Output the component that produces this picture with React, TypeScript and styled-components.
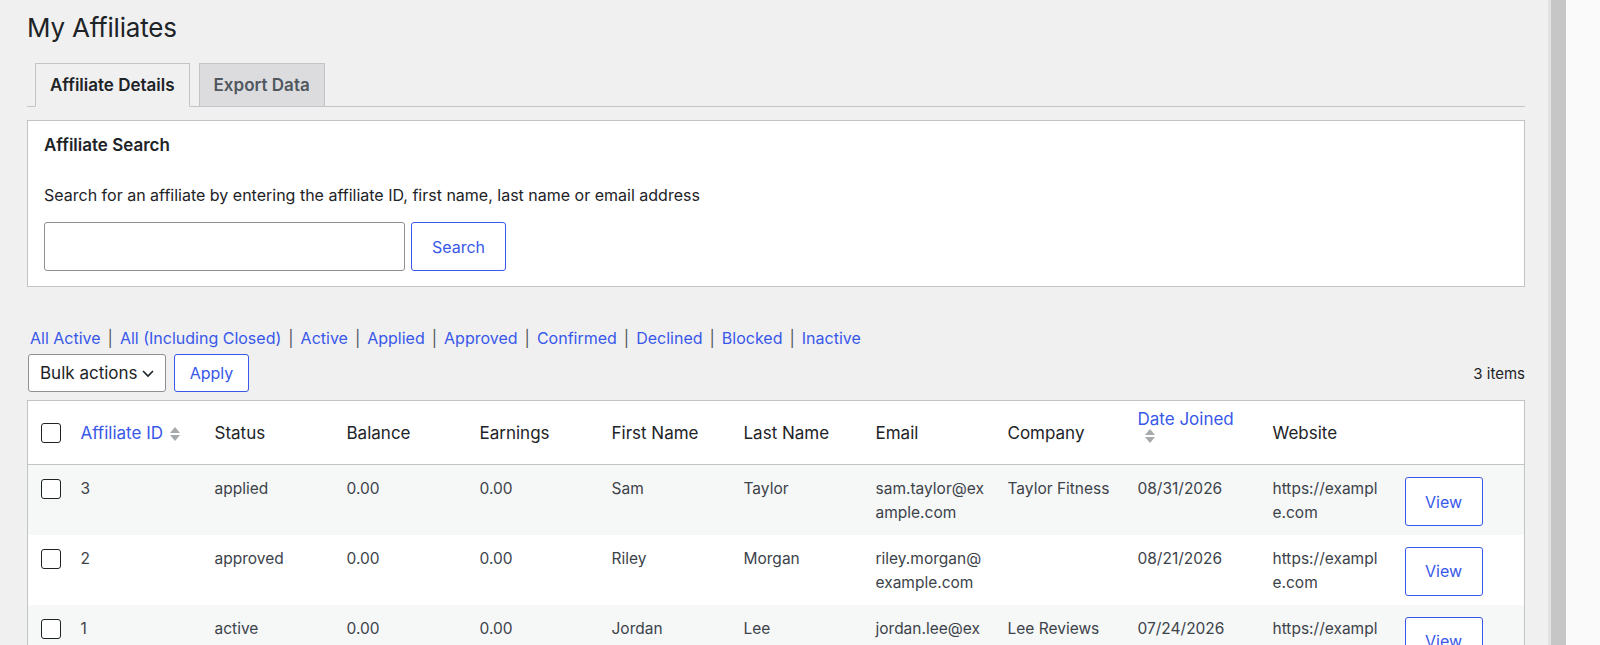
import React from "react";
import styled, { createGlobalStyle } from "styled-components";

const Global = createGlobalStyle`
  html, body { margin: 0; padding: 0; background: #f0f0f1; overflow: hidden; }
  body { font-family: Inter, "Noto Sans", sans-serif; font-size: 14px; color: #1d2327; }
  * { box-sizing: border-box; }
`;

const Page = styled.div`display: flex; width: 100%; height: 645px; overflow: hidden;`;
const Main = styled.div`width: 1548px; flex-shrink: 0; padding: 10px 23px 0 27px;`;
const Gutter = styled.div`width: 18px; flex-shrink: 0; border-left: 3px solid #e2e2e2; background: #c6c6c6;`;
const Right = styled.div`flex: 1; background: #fafafa;`;

const Title = styled.h1`font-size: 26px; font-weight: 400; margin: 0 0 18px; line-height: 35px; letter-spacing: -0.2px;`;
const Tabs = styled.div`display: flex; gap: 9px; padding-left: 8px; border-bottom: 1px solid #c3c4c7; height: 44px; align-items: flex-end;`;
const Tab = styled.div<{ $active?: boolean }>`
  height: ${p => (p.$active ? 44 : 43)}px; margin-bottom: ${p => (p.$active ? -1 : 0)}px;
  padding: 0 14px; display: flex; align-items: center; font-weight: 600; font-size: 17px;
  border: 1px solid #c3c4c7; border-bottom: ${p => (p.$active ? "1px solid #f0f0f1" : "none")};
  background: ${p => (p.$active ? "#f0f0f1" : "#dcdcde")}; color: ${p => (p.$active ? "#1d2327" : "#50575e")};
`;
const Box = styled.div`margin-top: 13px; background: #fff; border: 1px solid #c3c4c7; padding: 14px 16px 15px; height: 167px;`;
const BoxTitle = styled.div`font-weight: 600; font-size: 17px; margin-bottom: 30px;`;
const BoxText = styled.div`font-size: 16px; margin-bottom: 17px;`;
const SearchRow = styled.div`display: flex; gap: 6px;`;
const Input = styled.div`width: 361px; height: 49px; border: 1px solid #8c8f94; border-radius: 3px;`;
const OutlineBtn = styled.div<{ $w: number; $h: number }>`
  width: ${p => p.$w}px; height: ${p => p.$h}px; border: 1px solid #3858e9; border-radius: 3px; background: #fff;
  color: #3858e9; display: flex; align-items: center; justify-content: center; font-size: 16px; flex-shrink: 0;
`;
const Filters = styled.div`margin-top: 41px; display: flex; gap: 7px; font-size: 16px; color: #50575e; padding-left: 3px;`;
const Link = styled.span`color: #3858e9;`;
const Nav = styled.div`display: flex; align-items: center; gap: 8px; margin-top: 6px; height: 38px;`;
const Select = styled.div`width: 138px; height: 38px; border: 1px solid #8c8f94; border-radius: 3px; background: #fff; display: flex; align-items: center; gap: 3px; padding-left: 11px; font-size: 17px; margin-left: 1px;`;
const Items = styled.div`margin-left: auto; font-size: 15px;`;
const Table = styled.table`margin-top: 8px; width: 100%; border-collapse: collapse; table-layout: fixed; background: #fff; border: 1px solid #c3c4c7;`;
const Th = styled.th<{ $link?: boolean }>`text-align: left; font-weight: 400; font-size: 17px; height: 64px; padding: 0 10px; border-bottom: 1px solid #c3c4c7; color: ${p => (p.$link ? "#3858e9" : "#1d2327")};`;
const Tr = styled.tr<{ $alt?: boolean }>`background: ${p => (p.$alt ? "#f6f7f7" : "#fff")};`;
const Td = styled.td`height: 70px; vertical-align: top; padding: 12px 10px 0; font-size: 15.5px; line-height: 24px; color: #3c434a; word-break: break-all;`;
const CheckCell = styled.td`width: 43px; vertical-align: top; padding: 14px 0 0 13px;`;
const CheckTh = styled.th`width: 43px; padding: 0 0 0 13px; border-bottom: 1px solid #c3c4c7;`;
const Check = styled.div`width: 20px; height: 20px; border: 1.5px solid #1d2327; border-radius: 3px; background: #fff;`;
const SortWrap = styled.span`display: inline-flex; flex-direction: column; gap: 2px; vertical-align: middle; margin-left: 7px;`;
const Up = styled.span`width:0;height:0;border-left:5px solid transparent;border-right:5px solid transparent;border-bottom:6px solid #a7aaad;`;
const Down = styled.span`width:0;height:0;border-left:5px solid transparent;border-right:5px solid transparent;border-top:6px solid #a7aaad;`;
const DateHead = styled.div`display: flex; flex-direction: column; margin-top: -14px;`;

const Sort = () => <SortWrap><Up /><Down /></SortWrap>;

const rows = [
  ["3", "applied", "Sam", "Taylor", "sam.taylor@example.com", "Taylor Fitness", "08/31/2026"],
  ["2", "approved", "Riley", "Morgan", "riley.morgan@example.com", "", "08/21/2026"],
  ["1", "active", "Jordan", "Lee", "jordan.lee@example.com", "Lee Reviews", "07/24/2026"],
];
const filters = ["All Active", "All (Including Closed)", "Active", "Applied", "Approved", "Confirmed", "Declined", "Blocked", "Inactive"];

export default function App() {
  return (
    <Page>
      <Global />
      <Main>
        <Title>My Affiliates</Title>
        <Tabs><Tab $active>Affiliate Details</Tab><Tab>Export Data</Tab></Tabs>
        <Box>
          <BoxTitle>Affiliate Search</BoxTitle>
          <BoxText>Search for an affiliate by entering the affiliate ID, first name, last name or email address</BoxText>
          <SearchRow><Input /><OutlineBtn $w={95} $h={49}>Search</OutlineBtn></SearchRow>
        </Box>
        <Filters>
          {filters.map((f, i) => (
            <React.Fragment key={f}>{i > 0 && <span>|</span>}<Link>{f}</Link></React.Fragment>
          ))}
        </Filters>
        <Nav>
          <Select>Bulk actions
            <svg width="14" height="14" viewBox="0 0 14 14"><path d="M2 5l5 5 5-5" fill="none" stroke="#1d2327" strokeWidth="1.6" /></svg>
          </Select>
          <OutlineBtn $w={75} $h={38}>Apply</OutlineBtn>
          <Items>3 items</Items>
        </Nav>
        <Table>
          <colgroup>
            <col style={{ width: 43 }} />
            <col style={{ width: 134 }} /><col style={{ width: 132 }} /><col style={{ width: 133 }} /><col style={{ width: 132 }} />
            <col style={{ width: 132 }} /><col style={{ width: 132 }} /><col style={{ width: 132 }} /><col style={{ width: 130 }} />
            <col style={{ width: 135 }} /><col style={{ width: 132 }} /><col />
          </colgroup>
          <thead>
            <tr>
              <CheckTh><Check /></CheckTh>
              <Th $link>Affiliate ID<Sort /></Th>
              <Th>Status</Th><Th>Balance</Th><Th>Earnings</Th><Th>First Name</Th><Th>Last Name</Th><Th>Email</Th><Th>Company</Th>
              <Th $link><DateHead>Date Joined<SortWrap><Up /><Down /></SortWrap></DateHead></Th>
              <Th>Website</Th><Th />
            </tr>
          </thead>
          <tbody>
            {rows.map((r, i) => (
              <Tr key={r[0]} $alt={i % 2 === 0}>
                <CheckCell><Check /></CheckCell>
                <Td>{r[0]}</Td><Td>{r[1]}</Td><Td>0.00</Td><Td>0.00</Td><Td>{r[2]}</Td><Td>{r[3]}</Td>
                <Td>{r[4]}</Td><Td>{r[5]}</Td><Td>{r[6]}</Td><Td>https://example.com</Td>
                <Td><OutlineBtn $w={78} $h={49}>View</OutlineBtn></Td>
              </Tr>
            ))}
          </tbody>
        </Table>
      </Main>
      <Gutter />
      <Right />
    </Page>
  );
}
